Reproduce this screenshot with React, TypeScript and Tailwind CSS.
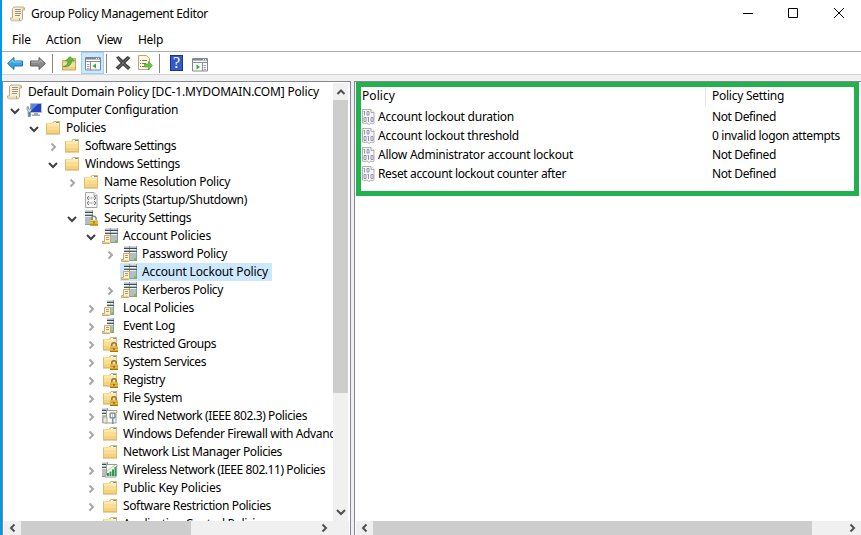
import { useLayoutEffect, useRef, useState, type ReactNode } from 'react';

/* Text that spreads its letter spacing so that it fills the given width. */
function Label({ text, w }: { text: string; w: number }) {
  const ref = useRef<HTMLSpanElement>(null);
  const [spacing, setSpacing] = useState(0);
  useLayoutEffect(() => {
    const el = ref.current;
    if (el) setSpacing((w - el.getBoundingClientRect().width) / text.length);
  }, [text, w]);
  return (
    <span ref={ref} className="whitespace-pre" style={{ letterSpacing: `${spacing}px` }}>
      {text}
    </span>
  );
}

function Svg({ children, size = 16 }: { children: ReactNode; size?: number }) {
  return (
    <svg width={size} height={size} viewBox="0 0 16 16" className="block shrink-0">
      {children}
    </svg>
  );
}

const FolderShape = () => (
  <>
    <path d="M1 3h6l2-2h6v2H1z" fill="#dcb766" />
    <path d="M1 3h14v11H1z" fill="#f9dd92" />
    <path d="M9 2h5v2H9z" fill="#fffdf2" />
    <path d="M11 2h3v1h-3z" fill="#4a9be0" />
    <path d="M1 4h7l1-1h6v3H1z" fill="#fdebb5" fillOpacity=".75" />
    <path d="M1 10h14v4H1z" fill="#f6d280" />
    <path d="M1.500 3.500v10M14.500 3v10.500" fill="none" stroke="#e3bd69" />
    <path d="M1 13.500h14v1H1z" fill="#cfa750" />
  </>
);

const LockShape = () => (
  <>
    <path d="M9.800 11V9a2.200 2.200 0 0 1 4.400 0v2" fill="none" stroke="#8f7434" strokeWidth="1.500" />
    <path d="M8 10.500h8V16H8z" fill="#d9a02c" />
    <path d="M8 10.500h8v1H8zM8 13h8v.8H8z" fill="#f2c75c" />
    <path d="M8 15h8v1H8z" fill="#a87412" />
    <path d="M11.500 12h1v2h-1z" fill="#5e4410" />
  </>
);

const ServerShape = ({ x, w = 6 }: { x: number; w?: number }) => (
  <g transform={`translate(${x} 0)`}>
    <rect width={w} height="15" fill="#b4bdc0" />
    <rect width={w} height="1" fill="#d3dadd" />
    <rect x={w - 1} width="1" height="15" fill="#8f9a9f" />
    <rect y="2" width={w} height="1" fill="#3c4a51" />
    <rect y="5" width={w} height="1" fill="#4b5960" />
    <rect y="3" width={w - 1} height="1" fill="#eef2f3" />
    <rect y="6" width={w - 1} height="1" fill="#eef2f3" />
    <rect y="14" width={w} height="1" fill="#909b9f" />
  </g>
);

const PaperShape = () => (
  <>
    <path d="M2.500 7.500h6v6.500l-1 1.500h-7v-2h2z" fill="#fbf0cd" stroke="#c2ab75" />
    <path d="M4 9.500h3M4 11.500h3" stroke="#a89b78" />
    <path d="M1 14h6v1H1z" fill="#efcf82" />
  </>
);

type IconName = 'scroll' | 'computer' | 'folder' | 'script' | 'security' | 'servers' | 'server' | 'locked' | 'wired' | 'wireless' | 'policy';

function Icon({ name }: { name: IconName }) {
  switch (name) {
    case 'scroll':
      return (
        <Svg>
          <path d="M4 1h9.500l1 1v2h-2v9L11 14.800H1.500L.5 13.500V12h2V2.500z" fill="#f8f0d8" stroke="#b3a379" strokeWidth=".9" />
          <path d="M12.500 1.500H14V4h-1.500z" fill="#dec384" />
          <path d="M1 12.500h8.500v2h-8z" fill="#ecdcae" />
          <path d="M9.500 12v2.500" stroke="#b3a379" />
          <path d="M5 3.500h6M5 5.500h6M5 7.500h6M5 9.500h5" stroke="#9c937e" />
        </Svg>
      );
    case 'computer':
      return (
        <Svg>
          <path d="M4.500 1.500h11v9h-11z" fill="#2145be" stroke="#b9bfca" />
          <path d="M5 2h7L6 8H5z" fill="#5c86e4" />
          <path d="M8 11h4v1.500h2V14H6v-1.500h2z" fill="#a1a7ad" />
          <path d="M1 5v3l1.200 1v5.500h2.300V9l1.200-1V5L4.500 4.500V7H2.300V4.500z" fill="#d7dde3" stroke="#6a7884" strokeWidth=".7" />
          <path d="M2.500 10h1.500v4H2.500z" fill="#3e83c0" />
        </Svg>
      );
    case 'folder':
      return <Svg><FolderShape /></Svg>;
    case 'locked':
      return <Svg><FolderShape /><LockShape /></Svg>;
    case 'script':
      return (
        <Svg>
          <path d="M2.500.5h8.500l3 3v12H2.500z" fill="#f8f8f8" stroke="#a7a7a7" />
          <path d="M11 .5v3h3" fill="#fff" stroke="#a7a7a7" />
          <path d="M6 4.500H5v1L4 6l1 .5v1h1M11 4.500h1v1l1 .5-1 .5v1h-1M6 9.500H5v1l-1 .5 1 .5v1h1M11 9.500h1v1l1 .5-1 .5v1h-1" fill="none" stroke="#5f5f5f" strokeWidth=".8" />
          <path d="M6.500 6h4M6.500 11h4" stroke="#777" strokeDasharray="1 .7" />
        </Svg>
      );
    case 'security':
      return (
        <Svg>
          <ServerShape x={2} w={8} />
          <path d="M8.500 10V8.500a2.300 2.300 0 0 1 4.600 0V10" fill="none" stroke="#8b8b80" strokeWidth="1.400" />
          <path d="M7 10h8v5.500H7z" fill="#deaa35" />
          <path d="M7 10h8v1H7zM7 12.500h8v.8H7z" fill="#f2cf68" />
          <path d="M7 14.500h8v1H7z" fill="#a87412" />
          <path d="M10.500 11.500h1v2h-1z" fill="#5e4410" />
        </Svg>
      );
    case 'servers':
      return (
        <Svg>
          <ServerShape x={3} />
          <ServerShape x={9} w={7} />
          <path d="M13 12h2v2h-2z" fill="#6bd319" />
          <PaperShape />
        </Svg>
      );
    case 'server':
      return (
        <Svg>
          <ServerShape x={5} w={7} />
          <path d="M9.500 12h2v2h-2z" fill="#6bd319" />
          <PaperShape />
        </Svg>
      );
    case 'wired':
      return (
        <Svg>
          <ServerShape x={0} />
          <path d="M4.500 2.500H15v2h-1v10.500H3.500v-2h1z" fill="#fbfaf4" stroke="#9d9d92" />
          <path d="M8 5h5v5H8z" fill="#b8c4cf" stroke="#6f7f8e" />
          <path d="M9.500 6v3M11.500 6v3" stroke="#fff" />
          <path d="M10 10h1.500v6H10z" fill="#6298c8" />
          <path d="M1 9h4v6H1z" fill="#e8e6da" stroke="#a7a58f" />
        </Svg>
      );
    case 'wireless':
      return (
        <Svg>
          <ServerShape x={0} />
          <path d="M4.500 2.500H15v2h-1v10.500H3v-2h1.500z" fill="#fbfaf4" stroke="#9d9d92" />
          <path d="M5 11h2v3H5zM7.500 9.500h2V14h-2zM10 7.500h2V14h-2zM12.500 5h2v9h-2z" fill="#2d9a50" />
          <path d="M5 9l8-6" stroke="#9ad1a9" />
        </Svg>
      );
    case 'policy':
      return (
        <Svg>
          <path d="M1.500.5h8.500l3 3v10l-1 1.500-2-1-2 1.500-2-1.500-2 .5-2.500-.5z" fill="#f6f6f6" stroke="#b1b1b1" />
          <path d="M10 .5v3h3" fill="#fff" stroke="#aaa" />
          <path d="M3.500 2v4.500M2.500 2.500h1M3 8.500h2v4H3zM6 2.500h2v3.500H6zM7.500 8v5M6.500 8.500h1M10 8.500h2v4h-2z" fill="none" stroke="#8c89b4" strokeWidth=".9" />
        </Svg>
      );
  }
}

type Direction = 'left' | 'right' | 'up' | 'down';
const chevrons: Record<Direction, string> = {
  left: 'M6.500 1.500 3 5l3.500 3.500',
  right: 'M3.500 1.500 7 5 3.500 8.500',
  up: 'M1.500 7 5 3.500 8.500 7',
  down: 'M1 3 5 7l4-4',
};

function Chevron({ dir, color = '#505050' }: { dir: Direction; color?: string }) {
  return (
    <svg width="10" height="10" viewBox="0 0 10 10" className="block shrink-0">
      <path d={chevrons[dir]} fill="none" stroke={color} strokeWidth="2" />
    </svg>
  );
}

interface TreeItem { text: string; w: number; icon: IconName; indent: string; open?: boolean; leaf?: boolean; selected?: boolean }

const L0 = 'pl-[6px]';
const L1 = 'pl-[25px]';
const L2 = 'pl-[44px]';
const L3 = 'pl-[63px]';
const L4 = 'pl-[82px]';
const L5 = 'pl-[101px]';

const tree: TreeItem[] = [
  { text: 'Computer Configuration', w: 131, icon: 'computer', indent: L0, open: true },
  { text: 'Policies', w: 40, icon: 'folder', indent: L1, open: true },
  { text: 'Software Settings', w: 91, icon: 'folder', indent: L2 },
  { text: 'Windows Settings', w: 95, icon: 'folder', indent: L2, open: true },
  { text: 'Name Resolution Policy', w: 126, icon: 'folder', indent: L3 },
  { text: 'Scripts (Startup/Shutdown)', w: 143, icon: 'script', indent: L3, leaf: true },
  { text: 'Security Settings', w: 87, icon: 'security', indent: L3, open: true },
  { text: 'Account Policies', w: 88, icon: 'servers', indent: L4, open: true },
  { text: 'Password Policy', w: 85, icon: 'servers', indent: L5 },
  { text: 'Account Lockout Policy', w: 126, icon: 'servers', indent: L5, leaf: true, selected: true },
  { text: 'Kerberos Policy', w: 81, icon: 'servers', indent: L5 },
  { text: 'Local Policies', w: 71, icon: 'server', indent: L4 },
  { text: 'Event Log', w: 52, icon: 'server', indent: L4 },
  { text: 'Restricted Groups', w: 93, icon: 'locked', indent: L4 },
  { text: 'System Services', w: 83, icon: 'locked', indent: L4 },
  { text: 'Registry', w: 42, icon: 'locked', indent: L4 },
  { text: 'File System', w: 59, icon: 'locked', indent: L4 },
  { text: 'Wired Network (IEEE 802.3) Policies', w: 184, icon: 'wired', indent: L4 },
  { text: 'Windows Defender Firewall with Advanced Security', w: 270, icon: 'folder', indent: L4 },
  { text: 'Network List Manager Policies', w: 159, icon: 'folder', indent: L4, leaf: true },
  { text: 'Wireless Network (IEEE 802.11) Policies', w: 202, icon: 'wireless', indent: L4 },
  { text: 'Public Key Policies', w: 98, icon: 'folder', indent: L4 },
  { text: 'Software Restriction Policies', w: 148, icon: 'folder', indent: L4 },
  { text: 'Application Control Policies', w: 144, icon: 'folder', indent: L4 },
];

const policies = [
  { name: 'Account lockout duration', w: 136, value: 'Not Defined', vw: 64 },
  { name: 'Account lockout threshold', w: 141, value: '0 invalid logon attempts', vw: 128 },
  { name: 'Allow Administrator account lockout', w: 195, value: 'Not Defined', vw: 64 },
  { name: 'Reset account lockout counter after', w: 188, value: 'Not Defined', vw: 64 },
];

function TreeRow({ item }: { item: TreeItem }) {
  return (
    <div className={`flex h-[18px] items-center ${item.indent}`}>
      <div className="flex w-[16px] shrink-0 pl-px pt-[2px]">
        {!item.leaf && <Chevron dir={item.open ? 'down' : 'right'} color={item.open ? '#404040' : '#a6a6a6'} />}
      </div>
      <div className={`flex h-[18px] items-center pr-[4px] pl-px ${item.selected ? 'bg-[#cce8ff]' : ''}`}>
        <div className="mr-[5px]"><Icon name={item.icon} /></div>
        <Label text={item.text} w={item.w} />
      </div>
    </div>
  );
}

const Divider = () => <div className="h-[19px] w-px shrink-0 bg-[#858585]" />;

function Arrow({ back }: { back?: boolean }) {
  return (
    <Svg>
      <path
        d={back ? 'M.6 8.500 7 2.500V6h8.500v5H7v3.500z' : 'M15.400 8.500 9 2.500V6H.5v5H9v3.500z'}
        fill={back ? '#35a4e3' : '#8b8b8b'}
        stroke={back ? '#2873a5' : '#5e5e5e'}
      />
      <path d={back ? 'M2.500 8 6 5v2h8.500' : 'M1.500 7H10V5l3 2.700'} fill="none" stroke={back ? '#8bd3f7' : '#b9b9b9'} />
    </Svg>
  );
}

function Pane({ right }: { right?: boolean }) {
  return (
    <svg width="16" height="14" viewBox="0 0 16 14" className="block">
      <path d="M.5.500h15v12.500H.5z" fill="#fafafa" stroke="#84888e" />
      <path d="M1 1h14v1.500H1z" fill="#7d858f" />
      <path d="M11 1.500h1M13 1.500h1" stroke="#fff" />
      <path d="M1 4.500h14" stroke="#8a9098" />
      <path d={right ? 'M10.500 5v8' : 'M5.500 5v8'} stroke="#8a9098" />
      <path d={right ? 'M11.500 7.500H14M11.500 9.500H14M11.500 11.500H14' : 'M2 7.500h2.500M2 9.500h2.500M2 11.500h2.500'} stroke="#a0a4aa" />
      <path d={right ? 'M4.500 6.500v5L8 9z' : 'M11 6.500v5L7.500 9z'} fill="#39a934" />
    </svg>
  );
}

export default function App() {
  return (
    <div className="flex h-[535px] w-[861px] flex-col overflow-hidden border-l-2 border-[#0099e8] bg-white font-['Noto_Sans','Open_Sans',sans-serif] text-[12px] leading-[18px] text-black">
      <header className="flex h-[28px] shrink-0 items-center pl-[8px]">
        <Icon name="scroll" />
        <div className="ml-[5px] flex-1"><Label text="Group Policy Management Editor" w={177} /></div>
        <svg width="120" height="28" viewBox="0 0 120 28" fill="none" stroke="#000">
          <path d="M2 13.500h10M47.500 8.500h9v9h-9zM93 8l10 10M103 8 93 18" />
        </svg>
      </header>
      <nav className="flex h-[24px] shrink-0 items-center border-b border-[#acacb0] pl-[10px] pt-px">
        <div className="w-[34px]"><Label text="File" w={19} /></div>
        <div className="w-[51px]"><Label text="Action" w={35} /></div>
        <div className="w-[41px]"><Label text="View" w={25} /></div>
        <Label text="Help" w={25} />
      </nav>
      <div className="flex h-[23px] shrink-0 items-center border-b border-[#d4d4d4] pl-[5px]">
        <Arrow back />
        <div className="ml-[7px] mr-[6px]"><Arrow /></div>
        <Divider />
        <div className="ml-[8px] mr-[4px]">
          <Svg>
            <path d="M1.500 5.500h5l1-2h7v11.500h-13z" fill="#efcf86" stroke="#c9a65a" />
            <path d="M2 8h12v4H2z" fill="#f8dfa0" />
            <path d="M2 11.500C5.500 11 7 9 7 6H4.500L9 1.500 13.500 6h-3c0 4-3 6.500-8.500 5.500z" fill="#5dbd3d" stroke="#378e27" strokeWidth=".6" />
          </Svg>
        </div>
        <div className="flex h-[22px] w-[23px] items-center justify-center border border-[#99d1ff] bg-[#cce8ff] pt-[2px]"><Pane /></div>
        <div className="ml-[2px]"><Divider /></div>
        <div className="ml-[8px] mr-[6px]">
          <Svg>
            <path d="M1 2.500 3.500 1 8 5l4.500-4L15.500 3l-5 5 5 4.500-2.500 2.500-5-4.500L3.500 15 .5 12.500l5-4.500z" fill="#484848" />
            <path d="M3 3 13 13M13 3 3 13" stroke="#6c6c6c" />
          </Svg>
        </div>
        <Svg>
          <path d="M1.500.5h8l3 3v11h-11z" fill="#fff8dd" stroke="#b7a678" />
          <path d="M3 5.500h1M5 5.500h5M3 8.500h1M5 8.500h4M3 11.500h1M5 11.500h4" stroke="#777" />
          <path d="M7.500 9h4V6.500l4 4-4 4V12h-4z" fill="#65c644" stroke="#43a12e" strokeWidth=".6" />
        </Svg>
        <div className="ml-[6px] mr-[10px]"><Divider /></div>
        <div className="flex h-4 w-[13px] items-center justify-center border border-[#1b3687] bg-[#3159c8] font-['Liberation_Serif',serif] text-[16px] leading-none text-white">?</div>
        <div className="ml-[9px] pt-[3px]"><Pane right /></div>
      </div>
      <div className="h-[6px] shrink-0 bg-[#f0f0f0]" />
      <main className="flex min-h-0 flex-1 bg-[#f0f0f0]">
        <aside className="flex w-[349px] shrink-0 flex-col border-x border-t border-[#828790] bg-white">
          <div className="flex min-h-0 flex-1">
            <div className="min-w-0 flex-1 overflow-hidden pt-px">
              <div className="flex h-[18px] items-center pl-[4px]">
                <Icon name="scroll" />
                <div className="pl-[5px]"><Label text="Default Domain Policy [DC-1.MYDOMAIN.COM] Policy" w={291} /></div>
              </div>
              {tree.map((item) => <TreeRow key={item.text} item={item} />)}
            </div>
            <div className="mr-[2px] mt-px flex w-[15px] shrink-0 flex-col items-center bg-[#f0f0f0]">
              <div className="flex h-[17px] items-center"><Chevron dir="up" /></div>
              <div className="h-[293px] w-full bg-[#cdcdcd]" />
              <div className="flex-1" />
              <div className="flex h-[19px] items-center"><Chevron dir="down" /></div>
            </div>
          </div>
          <div className="mx-px flex h-[14px] shrink-0 items-center bg-[#f0f0f0]">
            <div className="flex w-[17px] justify-center"><Chevron dir="left" /></div>
            <div className="h-full w-[170px] bg-[#cdcdcd]" />
            <div className="flex-1" />
            <div className="mr-[20px]"><Chevron dir="right" /></div>
          </div>
        </aside>
        <section className="ml-[3px] flex min-w-0 flex-1 flex-col border-l border-t border-[#828790] bg-white pl-px">
          <div className="h-[114px] w-[503px] border-[5px] border-[#22b14c]">
            <div className="flex h-[20px] items-start">
              <div className="h-[19px] w-[345px] border-r border-[#e5e5e5] pl-px leading-[17px]"><Label text="Policy" w={33} /></div>
              <div className="pl-[6px] leading-[17px]"><Label text="Policy Setting" w={72} /></div>
            </div>
            {policies.map((p) => (
              <div key={p.name} className="flex h-[19px] items-center">
                <div className="flex w-[351px] items-center">
                  <Icon name="policy" />
                  <div className="pl-px"><Label text={p.name} w={p.w} /></div>
                </div>
                <Label text={p.value} w={p.vw} />
              </div>
            ))}
          </div>
          <div className="flex-1" />
          <div className="flex h-[14px] shrink-0 items-center bg-[#f0f0f0]">
            <div className="flex w-[17px] justify-center"><Chevron dir="left" /></div>
            <div className="h-full w-[439px] bg-[#cdcdcd]" />
            <div className="flex-1" />
            <div className="mr-[4px]"><Chevron dir="right" /></div>
          </div>
        </section>
      </main>
    </div>
  );
}
